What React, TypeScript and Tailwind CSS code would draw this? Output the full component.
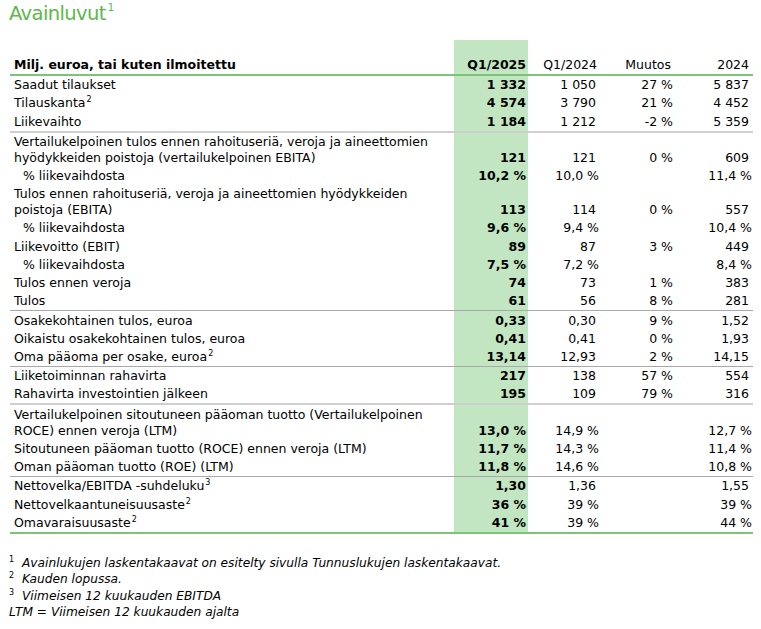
import React from "react";

type Row = {
  label: React.ReactNode;
  v: [string, string, string, string];
  indent?: boolean;
  double?: boolean;
  sepBefore?: "thick" | "thin";
};

const Sup = ({ n }: { n: string }) => (
  <sup className="text-[8px] relative -top-[5px] ml-[1px] align-baseline">{n}</sup>
);

const rows: Row[] = [
  { label: "Saadut tilaukset", v: ["1 332", "1 050", "27 %", "5 837"] },
  { label: <>Tilauskanta<Sup n="2" /></>, v: ["4 574", "3 790", "21 %", "4 452"] },
  { label: "Liikevaihto", v: ["1 184", "1 212", "-2 %", "5 359"] },
  {
    label: (
      <>
        Vertailukelpoinen tulos ennen rahoituseriä, veroja ja aineettomien
        <br />
        hyödykkeiden poistoja (vertailukelpoinen EBITA)
      </>
    ),
    v: ["121", "121", "0 %", "609"],
    double: true,
    sepBefore: "thick",
  },
  { label: "% liikevaihdosta", v: ["10,2 %", "10,0 %", "", "11,4 %"], indent: true },
  {
    label: (
      <>
        Tulos ennen rahoituseriä, veroja ja aineettomien hyödykkeiden
        <br />
        poistoja (EBITA)
      </>
    ),
    v: ["113", "114", "0 %", "557"],
    double: true,
  },
  { label: "% liikevaihdosta", v: ["9,6 %", "9,4 %", "", "10,4 %"], indent: true },
  { label: "Liikevoitto (EBIT)", v: ["89", "87", "3 %", "449"] },
  { label: "% liikevaihdosta", v: ["7,5 %", "7,2 %", "", "8,4 %"], indent: true },
  { label: "Tulos ennen veroja", v: ["74", "73", "1 %", "383"] },
  { label: "Tulos", v: ["61", "56", "8 %", "281"] },
  { label: "Osakekohtainen tulos, euroa", v: ["0,33", "0,30", "9 %", "1,52"], sepBefore: "thin" },
  { label: "Oikaistu osakekohtainen tulos, euroa", v: ["0,41", "0,41", "0 %", "1,93"] },
  { label: <>Oma pääoma per osake, euroa<Sup n="2" /></>, v: ["13,14", "12,93", "2 %", "14,15"] },
  { label: "Liiketoiminnan rahavirta", v: ["217", "138", "57 %", "554"], sepBefore: "thin" },
  { label: "Rahavirta investointien jälkeen", v: ["195", "109", "79 %", "316"] },
  {
    label: (
      <>
        Vertailukelpoinen sitoutuneen pääoman tuotto (Vertailukelpoinen
        <br />
        ROCE) ennen veroja (LTM)
      </>
    ),
    v: ["13,0 %", "14,9 %", "", "12,7 %"],
    double: true,
    sepBefore: "thick",
  },
  { label: "Sitoutuneen pääoman tuotto (ROCE) ennen veroja (LTM)", v: ["11,7 %", "14,3 %", "", "11,4 %"] },
  { label: "Oman pääoman tuotto (ROE) (LTM)", v: ["11,8 %", "14,6 %", "", "10,8 %"] },
  { label: <>Nettovelka/EBITDA -suhdeluku<Sup n="3" /></>, v: ["1,30", "1,36", "", "1,55"], sepBefore: "thin" },
  { label: <>Nettovelkaantuneisuusaste<Sup n="2" /></>, v: ["36 %", "39 %", "", "39 %"] },
  { label: <>Omavaraisuusaste<Sup n="2" /></>, v: ["41 %", "39 %", "", "44 %"] },
];

function Sep({ kind }: { kind: "thick" | "thin" }) {
  return kind === "thick" ? (
    <div className="h-[2px] bg-[#cfcfcf] relative z-10" />
  ) : (
    <div className="h-[1px] bg-[#a9a9a9] relative z-10" />
  );
}

export default function App() {
  return (
    <div
      className="w-[761px] h-[629px] bg-white text-black overflow-hidden relative"
      style={{ fontFamily: '"DejaVu Sans", Verdana, sans-serif' }}
    >
      <div className="pl-[9px] pt-[1px] h-[40px]">
        <span className="text-[19.5px] leading-[26px] text-[#5cb84a] tracking-[-0.6px]">
          Avainluvut
          <sup className="text-[10px] relative -top-[9px] ml-[2px] align-baseline">1</sup>
        </span>
      </div>
      <div className="ml-[10px] w-[743px] text-[12.5px]">
        {/* header */}
        <div className="flex h-[34px]">
          <div className="flex-1 flex items-end pl-[4px] font-bold">
            <span className="leading-[18px]">Milj. euroa, tai kuten ilmoitettu</span>
          </div>
          <div className="w-[74px] bg-[#c2e6c1] flex items-end justify-end pr-[2px] font-bold">
            <span className="leading-[18px]">Q1/2025</span>
          </div>
          <div className="w-[72px] flex items-end justify-end pr-[3px]">
            <span className="leading-[18px]">Q1/2024</span>
          </div>
          <div className="w-[76px] flex items-end justify-end pr-[5px]">
            <span className="leading-[18px]">Muutos</span>
          </div>
          <div className="w-[77px] flex items-end justify-end pr-[4px]">
            <span className="leading-[18px]">2024</span>
          </div>
        </div>
        <div className="h-[2px] bg-[#7cc47a]" />
        {rows.map((r, i) => (
          <React.Fragment key={i}>
            {r.sepBefore && <Sep kind={r.sepBefore} />}
            <div className={`flex ${r.double ? "h-[34.2px]" : "h-[18.22px]"}`}>
              <div className={`flex-1 flex items-end ${r.indent ? "pl-[13px]" : "pl-[4px]"} ${r.double ? "pb-[1px]" : ""}`}>
                <span className={r.double ? "leading-[16px]" : "leading-[18px]"}>{r.label}</span>
              </div>
              <div className="w-[74px] bg-[#c2e6c1] flex items-end justify-end pr-[2px] font-bold">
                <span className="leading-[18px]">{r.v[0]}</span>
              </div>
              <div className={`w-[72px] flex items-end justify-end ${r.v[1].endsWith("%") ? "pr-[1px]" : "pr-[4px]"}`}>
                <span className="leading-[18px]">{r.v[1]}</span>
              </div>
              <div className="w-[76px] flex items-end justify-end pr-[3px]">
                <span className="leading-[18px]">{r.v[2]}</span>
              </div>
              <div className={`w-[77px] flex items-end justify-end ${r.v[3].endsWith("%") ? "pr-[1px]" : "pr-[4px]"}`}>
                <span className="leading-[18px]">{r.v[3]}</span>
              </div>
            </div>
          </React.Fragment>
        ))}
        <div className="h-[2px] bg-[#7cc47a]" />
      </div>
      <div className="pl-[9px] pt-[21px] text-[12.2px] leading-[16.4px]">
        <div className="flex">
          <span className="w-[13px] text-[8px] leading-[10px]">1</span>
          <span className="italic">Avainlukujen laskentakaavat on esitelty sivulla Tunnuslukujen laskentakaavat.</span>
        </div>
        <div className="flex">
          <span className="w-[13px] text-[8px] leading-[10px]">2</span>
          <span className="italic">Kauden lopussa.</span>
        </div>
        <div className="flex">
          <span className="w-[13px] text-[8px] leading-[10px]">3</span>
          <span className="italic">Viimeisen 12 kuukauden EBITDA</span>
        </div>
        <div className="italic">LTM = Viimeisen 12 kuukauden ajalta</div>
      </div>
    </div>
  );
}
